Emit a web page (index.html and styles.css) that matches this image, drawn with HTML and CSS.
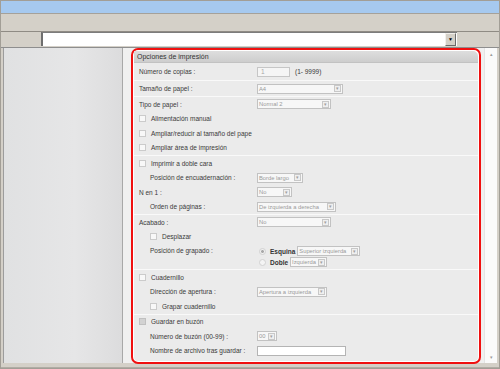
FILE: index.html
```html
<!DOCTYPE html>
<html>
    <head>
        <title>Opciones de impresión</title>
        <link rel="stylesheet" href="styles.css">
    </head>
    <body>
        <div class="frame">
            <div class="titlebar"></div>
            <div class="toolbar"></div>
            <div class="addressbar">
                <div class="addr-gap"></div>
                <div class="addr-input"><span class="addr-drop">&#9660;</span></div>
                <div class="addr-rest"></div>
            </div>
            <div class="main">
                <div class="sidebar"></div>
                <div class="content">
                    <div class="panel">
                        <div class="panel-title">Opciones de impresión</div>

                        <div class="section sec-first">
                            <div class="row">
                                <span class="label">Número de copias :</span>
                                <span class="field w33">1</span><span class="hint">(1- 9999)</span>
                            </div>
                        </div>

                        <div class="section sec-second">
                            <div class="row">
                                <span class="label">Tamaño de papel :</span>
                                <span class="select w86"><span class="val">A4</span><span class="drop">&#9662;</span></span>
                            </div>
                        </div>

                        <div class="section">
                            <div class="row">
                                <span class="label">Tipo de papel :</span>
                                <span class="select w74"><span class="val">Normal 2</span><span class="drop">&#9662;</span></span>
                            </div>
                            <div class="row"><span class="check"></span><span class="text">Alimentación manual</span></div>
                            <div class="row"><span class="check"></span><span class="text">Ampliar/reducir al tamaño del pape</span></div>
                            <div class="row"><span class="check"></span><span class="text">Ampliar área de impresión</span></div>
                        </div>

                        <div class="section">
                            <div class="row"><span class="check"></span><span class="text">Imprimir a doble cara</span></div>
                            <div class="row sub">
                                <span class="label">Posición de encuadernación :</span>
                                <span class="select w45"><span class="val">Borde largo</span><span class="drop">&#9662;</span></span>
                            </div>
                            <div class="row">
                                <span class="label">N en 1 :</span>
                                <span class="select w35"><span class="val">No</span><span class="drop">&#9662;</span></span>
                            </div>
                            <div class="row sub">
                                <span class="label">Orden de páginas :</span>
                                <span class="select w78"><span class="val">De izquierda a derecha</span><span class="drop">&#9662;</span></span>
                            </div>
                        </div>

                        <div class="section">
                            <div class="row">
                                <span class="label">Acabado :</span>
                                <span class="select w74"><span class="val">No</span><span class="drop">&#9662;</span></span>
                            </div>
                            <div class="row sub"><span class="check"></span><span class="text">Desplazar</span></div>
                            <div class="row sub staple">
                                <span class="label">Posición de grapado :</span>
                                <div class="radios">
                                    <div class="radio-line">
                                        <span class="radio on"></span><span class="radio-text">Esquina</span>
                                        <span class="select w62"><span class="val">Superior izquierda</span><span class="drop">&#9662;</span></span>
                                    </div>
                                    <div class="radio-line">
                                        <span class="radio"></span><span class="radio-text">Doble</span>
                                        <span class="select w37"><span class="val">Izquierda</span><span class="drop">&#9662;</span></span>
                                    </div>
                                </div>
                            </div>
                        </div>

                        <div class="section">
                            <div class="row"><span class="check"></span><span class="text">Cuadernillo</span></div>
                            <div class="row sub">
                                <span class="label">Dirección de apertura :</span>
                                <span class="select w69"><span class="val">Apertura a izquierda</span><span class="drop">&#9662;</span></span>
                            </div>
                            <div class="row sub"><span class="check"></span><span class="text">Grapar cuadernillo</span></div>
                        </div>

                        <div class="section">
                            <div class="row"><span class="check off"></span><span class="text">Guardar en buzón</span></div>
                            <div class="row sub">
                                <span class="label">Número de buzón (00-99) :</span>
                                <span class="select w19"><span class="val">00</span><span class="drop">&#9662;</span></span>
                            </div>
                            <div class="row sub">
                                <span class="label">Nombre de archivo tras guardar :</span>
                                <span class="field white w89"></span>
                            </div>
                        </div>
                    </div>
                    <div class="scrollbar"><span>&#9652;</span><span>&#9662;</span></div>
                </div>
            </div>
            <div class="statusbar"></div>
        </div>
    </body>
</html>
```

FILE: styles.css
```css
body{
    margin: 0;
    width: 500px;
    height: 369px;
    overflow: hidden;
    font: 6.5px "Liberation Sans", Arial, sans-serif;
    color: #3a3a3a;
}
.frame{
    box-sizing: border-box;
    width: 500px;
    height: 369px;
    border: 1px solid #a29e96;
    background-color: #d4d0c8;
    display: flex;
    flex-direction: column;
}
.titlebar{
    height: 12px;
    background-color: #a6c9ef;
    border-bottom: 1px solid #a5a19a;
}
.toolbar{
    height: 17px;
    border-bottom: 1px solid #8f8b84;
}
.addressbar{
    height: 15px;
    display: flex;
}
.addr-gap{
    width: 40px;
}
.addr-input{
    box-sizing: border-box;
    width: 416px;
    height: 14px;
    border-top: 1px solid #7c7c7c;
    border-left: 2px solid #6e6e6e;
    background-color: white;
    display: flex;
    justify-content: flex-end;
    align-items: center;
}
.addr-drop{
    width: 9px;
    height: 11px;
    margin-right: 1px;
    background-color: #d4d0c8;
    border: 1px solid #f2f0ec;
    border-right-color: #6a6a6a;
    border-bottom-color: #6a6a6a;
    font-size: 5px;
    line-height: 11px;
    text-align: center;
    color: black;
}
.main{
    height: 315px;
    border-top: 1px solid #8e8e8e;
    display: flex;
    padding-left: 2px;
    padding-right: 2px;
}
.sidebar{
    width: 118px;
    border-left: 1px solid #9c9c9c;
    border-right: 1px solid #a8a8a8;
    background: linear-gradient(to right, #e0e1e2, #e6e6e7 60%, #dcdcdd);
}
.content{
    flex: 1;
    display: flex;
    background-color: #f0f0f0;
    padding-left: 8px;
}
.panel{
    box-sizing: border-box;
    width: 350px;
    height: 316px;
    border: 2px solid #f01010;
    border-radius: 7px;
    padding: 1px;
    background-color: white;
    display: flex;
    flex-direction: column;
}
.panel-title{
    height: 11px;
    line-height: 11px;
    padding-left: 3px;
    font-size: 7px;
    color: #333;
    background: linear-gradient(#dedede, #cdcdcd);
    border-bottom: 1px solid #c2c2c2;
    border-top-right-radius: 5px;
}
.section{
    background-color: #ebebeb;
    border-bottom: 1px solid #f9f9f9;
}
.section:last-child{
    flex: 1;
    border-bottom: none;
    border-bottom-left-radius: 4px;
    border-bottom-right-radius: 4px;
}
.row{
    height: 14.5px;
    display: flex;
    align-items: center;
    padding-left: 5px;
    white-space: nowrap;
}
.sec-first .row{
    height: 17px;
}
.sec-second .row{
    height: 15px;
}
.row.sub{
    padding-left: 16px;
}
.label{
    width: 118px;
    flex: none;
}
.row.sub .label{
    width: 107px;
}
.check{
    box-sizing: border-box;
    width: 7px;
    height: 7px;
    border: 1px solid #cbcbcb;
    background-color: #f8f8f8;
    margin-right: 5px;
    flex: none;
}
.check.off{
    background-color: #d2d2d2;
    border-color: #c0c0c0;
}
.field{
    box-sizing: border-box;
    height: 10px;
    line-height: 8px;
    border: 1px solid #c6c6c6;
    background-color: #f5f5f5;
    color: #a8a8a8;
    padding-left: 3px;
}
.field.white{
    background-color: white;
    border-color: #b4b4b4;
}
.hint{
    margin-left: 5px;
}
.select{
    box-sizing: border-box;
    height: 10px;
    border: 1px solid #c2c2c2;
    background-color: #f7f7f7;
    color: #9a9a9a;
    display: flex;
    align-items: center;
    overflow: hidden;
    flex: none;
    font-size: 5.8px;
}
.val{
    flex: 1;
    overflow: hidden;
    padding-left: 1px;
    line-height: 8px;
}
.drop{
    box-sizing: border-box;
    width: 7px;
    height: 7px;
    margin: 0 1px;
    border: 1px solid #c8c8c8;
    background-color: #efefef;
    font-size: 5px;
    line-height: 5px;
    text-align: center;
    color: #a0a0a0;
    flex: none;
}
.w19{ width: 20px; }
.w33{ width: 33px; }
.w35{ width: 35px; }
.w37{ width: 37px; }
.w45{ width: 46px; }
.w62{ width: 63px; }
.w69{ width: 70px; }
.w74{ width: 74px; }
.w78{ width: 79px; }
.w86{ width: 86px; }
.w89{ width: 89px; }
.row.staple{
    height: 25px;
    align-items: flex-start;
    padding-top: 2px;
    box-sizing: border-box;
}
.staple .label{
    line-height: 10px;
}
.radios{
    display: flex;
    flex-direction: column;
    gap: 1px;
}
.radio-line{
    height: 10px;
    display: flex;
    align-items: center;
}
.radio{
    box-sizing: border-box;
    width: 7px;
    height: 7px;
    border-radius: 50%;
    border: 1px solid #d2d2d2;
    background-color: #f4f4f4;
    margin-left: 2px;
    margin-right: 4px;
}
.radio.on{
    background: radial-gradient(#a8a8a8 35%, #f0f0f0 45%);
}
.radio-text{
    font-weight: bold;
    color: #333;
    margin-right: 2px;
}
.scrollbar{
    width: 13px;
    margin-left: 3px;
    background-color: #fafafa;
    border-left: 1px solid #e4e4e4;
    display: flex;
    flex-direction: column;
    justify-content: space-between;
    align-items: center;
    font-size: 5px;
    color: #9a9a9a;
    padding: 3px 0;
    box-sizing: border-box;
}
.statusbar{
    flex: 1;
    border-bottom: 1px solid #b0aca4;
}
```
